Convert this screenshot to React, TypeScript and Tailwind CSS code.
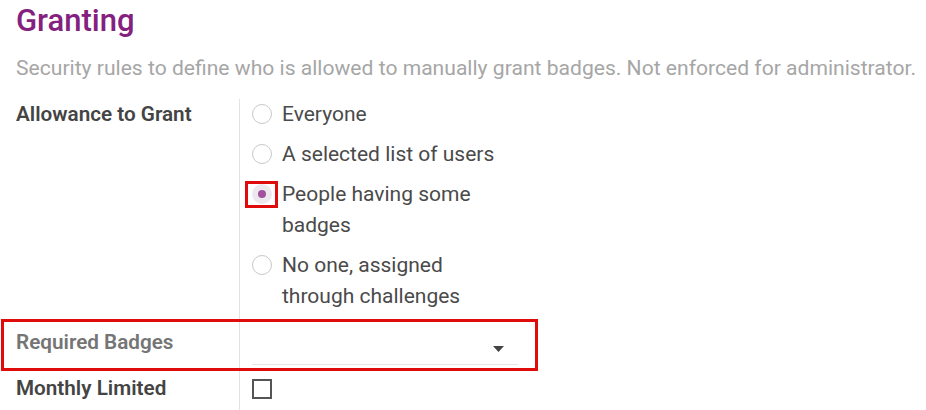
import React from "react";

const options = [
  { label: "Everyone", checked: false },
  { label: "A selected list of users", checked: false },
  { label: "People having some badges", checked: true },
  { label: "No one, assigned through challenges", checked: false },
];

function Radio({ checked }: { checked: boolean }) {
  if (checked) {
    return (
      <span className="relative mt-[5px] flex h-5 w-5 shrink-0 items-center justify-center rounded-full bg-[#ece8ee]">
        <span className="h-2 w-2 rounded-full bg-[#a0529c]" />
        {/* annotation box */}
        <span className="pointer-events-none absolute -left-[7px] -top-[3px] h-[27px] w-[33px] border-[3px] border-[#e00b0b]" />
      </span>
    );
  }
  return <span className="mt-[5px] h-5 w-5 shrink-0 rounded-full border border-[#c8c8c8] bg-white" />;
}

export default function App() {
  return (
    <div className="min-h-[410px] w-[926px] bg-white pl-4 font-['Roboto',sans-serif] text-[#4c4c4c]">
      <h2 className="pt-[5px] text-[31px] font-medium leading-[32px] text-[#84217f]">Granting</h2>
      <p className="mt-[17px] text-[21.1px] leading-[28px] text-[#a6a6a6]">
        Security rules to define who is allowed to manually grant badges. Not enforced for administrator.
      </p>

      <div className="mt-[17px] grid grid-cols-[223px_1fr]">
        {/* Allowance to Grant */}
        <div className="text-[20.7px] font-semibold leading-[31px] text-[#444]">Allowance to Grant</div>
        <div className="border-l border-[#e2e2e2] pb-[2px] pl-[12px]">
          <ul className="flex w-[254px] flex-col gap-[9px]">
            {options.map(o => (
              <li key={o.label} className="flex items-start gap-[10px]">
                <Radio checked={o.checked} />
                <span className="text-[21px] leading-[31px] text-[#4a4a4a]">{o.label}</span>
              </li>
            ))}
          </ul>
        </div>

        {/* Required Badges */}
        <div className="relative pt-[13px] pb-[13px] text-[20.7px] font-semibold leading-[31px] text-[#757575]">
          Required Badges
          <span className="pointer-events-none absolute -left-[15px] top-[5px] h-[52px] w-[537px] border-[3px] border-[#e00b0b]" />
        </div>
        <div className="border-l border-[#e2e2e2] pl-[12px] pt-[14px]">
          <div className="flex h-[37px] w-[266px] items-center justify-end border-b border-[#e6e6e6] pr-[14px]">
            <svg width="11" height="6" viewBox="0 0 11 6" className="mt-[6px]">
              <path d="M0 0h11L5.5 6z" fill="#444" />
            </svg>
          </div>
        </div>

        {/* Monthly Limited */}
        <div className="pt-[2px] text-[20.7px] font-semibold leading-[31px] text-[#444]">Monthly Limited</div>
        <div className="border-l border-[#e2e2e2] pl-[12px] pt-[8px] pb-[20px]">
          <span className="block h-5 w-5 border-2 border-[#555] bg-white" />
        </div>
      </div>
    </div>
  );
}
